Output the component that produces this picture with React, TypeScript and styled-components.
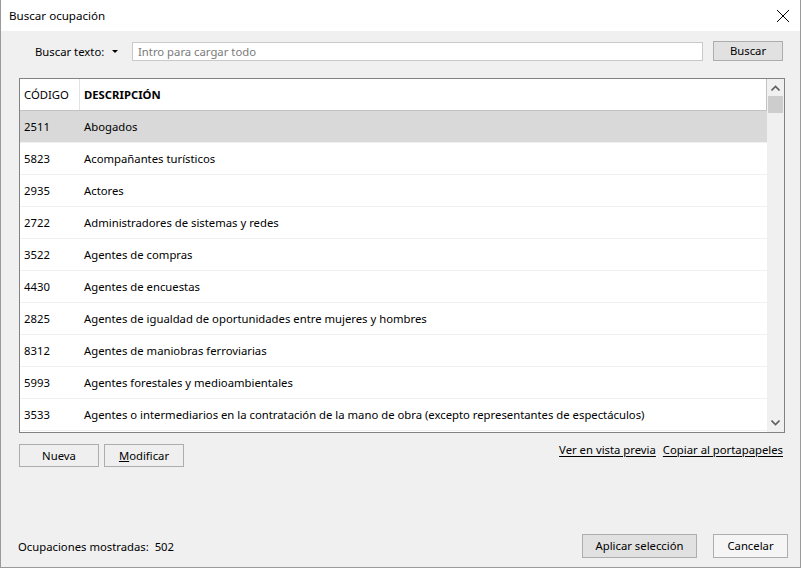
import styled, { createGlobalStyle } from "styled-components";

const GlobalStyle = createGlobalStyle`
	html, body {
		margin: 0;
		padding: 0;
		background: #f0f0f0;
	}
	* {
		box-sizing: border-box;
	}
`

const Window = styled.div`
	width: 801px;
	height: 568px;
	display: flex;
	flex-direction: column;
	border: 1px solid #9a9a9a;
	border-top: none;
	font-family: "Noto Sans", "Open Sans", sans-serif;
	font-size: 11.3px;
	color: #000;
	overflow: hidden;
`

const TitleBar = styled.div`
	height: 31px;
	flex: none;
	background: #fff;
	display: flex;
	align-items: center;
	justify-content: space-between;
	padding: 0 10px 0 8px;
	font-size: 11.6px;
`

const Body = styled.div`
	flex: 1;
	background: #f0f0f0;
	display: flex;
	flex-direction: column;
	padding: 10px 0 0 17px;
`

const SearchRow = styled.div`
	display: flex;
	align-items: center;
	height: 20px;
	padding-left: 17px;
	margin-right: 17px;
`

const Label = styled.span`
	white-space: nowrap;
	width: 77px;
	flex: none;
`

const DropArrow = styled.span`
	width: 0;
	height: 0;
	border-left: 3px solid transparent;
	border-right: 3px solid transparent;
	border-top: 3px solid #000;
	margin: 0 14px 0 0;
`

const SearchInput = styled.input`
	flex: 1;
	height: 19px;
	border: 1px solid #c9c9c9;
	background: #fff;
	font: inherit;
	padding: 0 5px;
	outline: none;
	&::placeholder {
		color: #7a7a7a;
	}
`

const Button = styled.button<{ $w: number; $h?: number; $bg?: string }>`
	width: ${p => p.$w}px;
	height: ${p => p.$h ?? 20}px;
	background: ${p => p.$bg ?? "#e1e1e1"};
	border: 1px solid #adadad;
	font: inherit;
	line-height: 1;
	color: #000;
	padding: 0;
	flex: none;
	display: flex;
	align-items: center;
	justify-content: center;
`

const SearchButton = styled(Button)`
	margin-left: 10px;
`

const Table = styled.div`
	margin-top: 17px;
	width: 766px;
	height: 355px;
	border: 1px solid #828282;
	background: #fff;
	display: flex;
	margin-left: 1px;
`

const List = styled.div`
	flex: 1;
	overflow: hidden;
`

const Header = styled.div`
	display: flex;
	height: 32px;
	border-bottom: 1px solid #c3c3c3;
	border-right: 1px solid #c3c3c3;
`

const HeadCell = styled.div<{ $code?: boolean }>`
	display: flex;
	align-items: center;
	padding-left: 4px;
	font-weight: ${p => (p.$code ? 400 : 700)};
	width: ${p => (p.$code ? "60px" : "auto")};
	flex: ${p => (p.$code ? "none" : "1")};
	border-right: ${p => (p.$code ? "1px solid #e3e3e3" : "none")};
`

const Row = styled.div<{ $selected?: boolean }>`
	display: flex;
	height: 32px;
	align-items: center;
	background: ${p => (p.$selected ? "#d9d9d9" : "#fff")};
	border-bottom: 1px solid #f0f0f0;
`

const Cell = styled.div<{ $code?: boolean }>`
	padding-left: 4px;
	white-space: nowrap;
	width: ${p => (p.$code ? "60px" : "auto")};
	flex: ${p => (p.$code ? "none" : "1")};
`

const ScrollBar = styled.div`
	width: 17px;
	flex: none;
	background: #f0f0f0;
	display: flex;
	flex-direction: column;
	align-items: center;
	padding-bottom: 1px;
`

const ScrollArrow = styled.div`
	height: 17px;
	display: flex;
	align-items: center;
	justify-content: center;
`

const Thumb = styled.div`
	width: 15px;
	height: 17px;
	background: #cdcdcd;
`

const Track = styled.div`
	flex: 1;
`

const ActionRow = styled.div`
	display: flex;
	align-items: center;
	margin-top: 11px;
	margin-left: 1px;
	width: 764px;
	gap: 5px;
`

const Underlined = styled.span`
	text-decoration: underline;
`

const Links = styled.div`
	margin-left: auto;
	display: flex;
	gap: 7px;
	align-self: flex-start;
	margin-top: -2px;
`

const Link = styled.span`
	text-decoration: underline;
	text-underline-offset: 2px;
`

const Footer = styled.div`
	margin-top: auto;
	display: flex;
	align-items: center;
	height: 24px;
	margin-bottom: 10px;
`

const Count = styled.span`
	white-space: pre;
	margin-top: 3px;
`

const FooterButtons = styled.div`
	margin-left: auto;
	display: flex;
	gap: 16px;
	margin-right: 12px;
	margin-top: 2px;
`

const rows: [string, string][] = [
	["2511", "Abogados"],
	["5823", "Acompañantes turísticos"],
	["2935", "Actores"],
	["2722", "Administradores de sistemas y redes"],
	["3522", "Agentes de compras"],
	["4430", "Agentes de encuestas"],
	["2825", "Agentes de igualdad de oportunidades entre mujeres y hombres"],
	["8312", "Agentes de maniobras ferroviarias"],
	["5993", "Agentes forestales y medioambientales"],
	["3533", "Agentes o intermediarios en la contratación de la mano de obra (excepto representantes de espectáculos)"],
]

export default function App() {
	return (
		<>
			<GlobalStyle />
			<Window>
				<TitleBar>
					<span>Buscar ocupación</span>
					<svg width="14" height="14" viewBox="0 0 14 14">
						<path d="M1 1 L13 13 M13 1 L1 13" stroke="#000" strokeWidth="1" />
					</svg>
				</TitleBar>
				<Body>
					<SearchRow>
						<Label>Buscar texto:</Label>
						<DropArrow />
						<SearchInput placeholder="Intro para cargar todo" />
						<SearchButton $w={70}>Buscar</SearchButton>
					</SearchRow>
					<Table>
						<List>
							<Header>
								<HeadCell $code>CÓDIGO</HeadCell>
								<HeadCell>DESCRIPCIÓN</HeadCell>
							</Header>
							{rows.map(([code, desc], i) => (
								<Row key={code} $selected={i === 0}>
									<Cell $code>{code}</Cell>
									<Cell>{desc}</Cell>
								</Row>
							))}
						</List>
						<ScrollBar>
							<ScrollArrow>
								<svg width="9" height="6" viewBox="0 0 9 6">
									<path d="M0.5 5.5 L4.5 1.5 L8.5 5.5" stroke="#606060" strokeWidth="1.6" fill="none" />
								</svg>
							</ScrollArrow>
							<Thumb />
							<Track />
							<ScrollArrow>
								<svg width="9" height="6" viewBox="0 0 9 6">
									<path d="M0.5 0.5 L4.5 4.5 L8.5 0.5" stroke="#606060" strokeWidth="1.6" fill="none" />
								</svg>
							</ScrollArrow>
						</ScrollBar>
					</Table>
					<ActionRow>
						<Button $w={80} $h={23} $bg="#efefef">Nueva</Button>
						<Button $w={80} $h={23} $bg="#efefef"><Underlined>M</Underlined>odificar</Button>
						<Links>
							<Link>Ver en vista previa</Link>
							<Link>Copiar al portapapeles</Link>
						</Links>
					</ActionRow>
					<Footer>
						<Count>Ocupaciones mostradas:  502</Count>
						<FooterButtons>
							<Button $w={115} $h={24}>Aplicar selección</Button>
							<Button $w={75} $h={24} $bg="#f5f5f5">Cancelar</Button>
						</FooterButtons>
					</Footer>
				</Body>
			</Window>
		</>
	);
}
